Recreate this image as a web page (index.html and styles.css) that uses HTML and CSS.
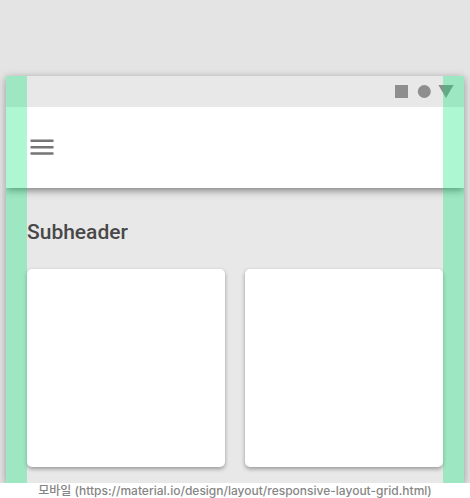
FILE: index.html
```html
<!DOCTYPE html>
<html lang="ko">
<head>
  <meta charset="UTF-8" />
  <meta name="viewport" content="width=device-width, initial-scale=1" />
  <title>Responsive layout grid - mobile</title>
  <link rel="stylesheet" href="styles.css">
</head>
<body>
  <figure class="figure">
    <div class="stage">
      <div class="phone">
        <div class="status-bar">
          <svg width="60" height="14" viewBox="0 0 60 14" aria-hidden="true">
            <rect x="1" y="1" width="13" height="13" />
            <circle cx="30.3" cy="7.5" r="6.5" />
            <path d="M44.4 1h15.2L52 14z" />
          </svg>
        </div>
        <header class="app-bar">
          <button class="menu-button" type="button" aria-label="Menu">
            <svg width="24" height="17" viewBox="0 0 24 17" aria-hidden="true">
              <path d="M.5 .5h23v2.5H.5zM.5 6.9h23v2.5H.5zM.5 13.2h23v2.5H.5z" />
            </svg>
          </button>
        </header>
        <main class="content">
          <h2 class="subheader">Subheader</h2>
          <div class="cards">
            <div class="card"></div>
            <div class="card"></div>
          </div>
        </main>
        <!-- layout margins -->
        <div class="margin margin-left"></div>
        <div class="margin margin-right"></div>
      </div>
    </div>
    <figcaption class="caption">모바일 (https://material.io/design/layout/responsive-layout-grid.html)</figcaption>
  </figure>
</body>
</html>
```
FILE: styles.css
```css
* {
  box-sizing: border-box;
}
body {
  margin: 0;
  background: #fff;
  font-family: Roboto, "Noto Sans CJK KR", sans-serif;
}
.figure {
  margin: 0;
}
.stage {
  padding: 76px 6px 0;
  background: #e4e4e4;
  overflow: hidden;
}
.phone {
  position: relative;
  background: #e8e8e8;
  box-shadow: 0 2px 8px rgba(0, 0, 0, 0.35);
}
.status-bar {
  display: flex;
  justify-content: flex-end;
  padding: 8px 10px 9px;
}
.status-bar svg {
  display: block;
  fill: #8e8e8e;
}
.app-bar {
  display: flex;
  align-items: center;
  height: 81px;
  padding: 0 24px;
  background: #fff;
  box-shadow: 0 2px 8px rgba(0, 0, 0, 0.5);
  clip-path: inset(0 0 -12px 0);
}
.menu-button {
  padding: 0;
  border: 0;
  background: none;
}
.menu-button svg {
  display: block;
  fill: #757575;
}
.content {
  padding: 32px 21px 16px;
}
.subheader {
  margin: 0 0 25px;
  font-size: 21px;
  font-weight: 500;
  line-height: 24px;
  color: #484848;
}
.cards {
  display: grid;
  grid-template-columns: 1fr 1fr;
  gap: 20px;
}
.card {
  aspect-ratio: 1;
  background: #fff;
  border-radius: 5px;
  box-shadow: 0 2px 4px rgba(0, 0, 0, 0.35);
}
.margin {
  position: absolute;
  top: 0;
  bottom: 0;
  width: 21px;
  background: rgba(0, 230, 118, 0.32);
}
.margin-left {
  left: 0;
}
.margin-right {
  right: 0;
}
.caption {
  font-family: Inter, "Noto Sans CJK KR", sans-serif;
  font-size: 12px;
  font-weight: 500;
  line-height: 15px;
  text-align: center;
  color: #868686;
}
```
